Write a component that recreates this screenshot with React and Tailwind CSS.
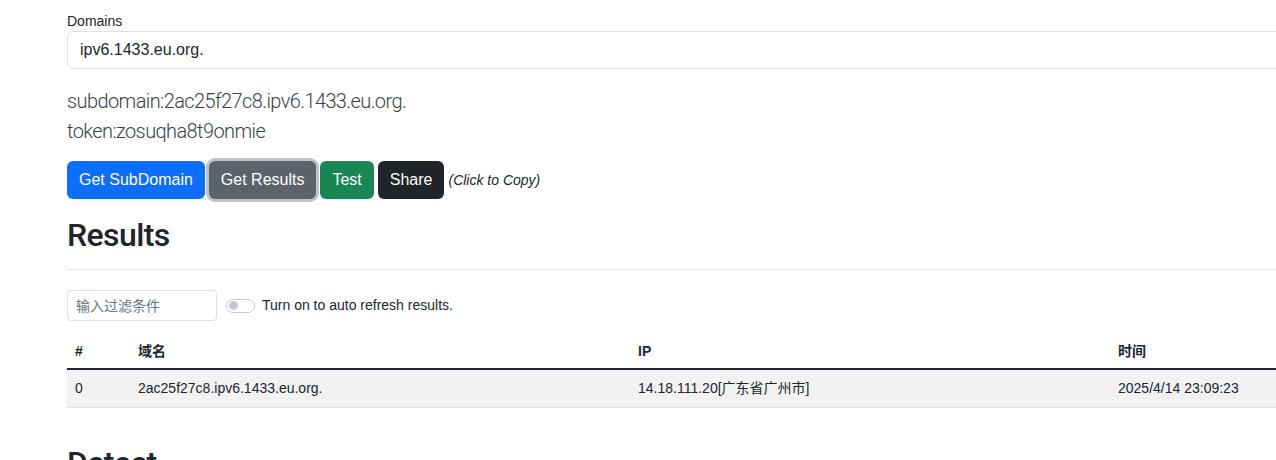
import React, { useState } from 'react';

function Btn({ className, children }) {
  return (
    <button className={`h-[38px] px-3 rounded-md text-[16px] text-white leading-none ${className}`}>
      {children}
    </button>
  );
}

export default function App() {
  const [auto, setAuto] = useState(false);
  const rows = [
    { id: 0, domain: '2ac25f27c8.ipv6.1433.eu.org.', ip: '14.18.111.20[广东省广州市]', time: '2025/4/14 23:09:23' },
  ];

  return (
    <div className="h-[460px] overflow-hidden bg-white text-[#212529] font-['Liberation_Sans','Noto_Sans_CJK_SC',sans-serif]">
      <div className="ml-[67px] w-[1240px] pt-[11px]">
        <label className="block text-[14px] leading-[20px]">Domains</label>
        <input
          className="block w-full h-[38px] px-3 border border-[#dee2e6] rounded-md text-[16px] outline-none"
          defaultValue="ipv6.1433.eu.org."
        />

        <div className="mt-[17px] text-[20px] font-light leading-[30px] tracking-[-0.6px] text-[#3a3f44] font-['Roboto',sans-serif]">
          <div>subdomain:2ac25f27c8.ipv6.1433.eu.org.</div>
          <div>token:zosuqha8t9onmie</div>
        </div>

        <div className="mt-[15px] flex items-center gap-1">
          <Btn className="bg-[#0d6efd]">Get SubDomain</Btn>
          <Btn className="bg-[#5c636a] shadow-[0_0_0_3px_rgba(130,138,145,0.5)]">Get Results</Btn>
          <Btn className="bg-[#198754]">Test</Btn>
          <Btn className="bg-[#212529]">Share</Btn>
          <em className="text-[14px] text-[#212529]">(Click to Copy)</em>
        </div>

        <h2 className="mt-[17px] text-[32px] font-medium leading-[38px] tracking-[-0.6px] font-['Roboto',sans-serif]">Results</h2>
        <hr className="mt-[15px] border-t border-[#e5e5e5]" />

        <div className="mt-[20px] flex items-center gap-[9px]">
          <input
            className="w-[150px] h-[31px] px-2 border border-[#dee2e6] rounded text-[14px] outline-none placeholder:text-[#6c757d]"
            placeholder="输入过滤条件"
          />
          <label className="flex items-center gap-[7px] text-[14px]">
            <span
              onClick={() => setAuto(!auto)}
              className="w-[29px] h-[14px] rounded-full border border-[#c5c8cc] flex items-center px-[2px]"
            >
              <span className="w-[9px] h-[9px] rounded-full bg-[#c5c8cc]" />
            </span>
            Turn on to auto refresh results.
          </label>
        </div>

        <table className="mt-[13px] w-full text-[14px] border-collapse">
          <thead>
            <tr className="border-b-2 border-[#212529]">
              <th className="w-[63px] text-left font-bold px-2 py-[7px] leading-[20px]">#</th>
              <th className="w-[500px] text-left font-bold px-2 py-[7px] leading-[20px]">域名</th>
              <th className="w-[480px] text-left font-bold px-2 py-[7px] leading-[20px]">IP</th>
              <th className="text-left font-bold px-2 py-[7px] leading-[20px]">时间</th>
            </tr>
          </thead>
          <tbody>
            {rows.map((r) => (
              <tr key={r.id} className="bg-[#f2f2f2] border-b border-[#dee2e6]">
                <td className="px-2 py-[8px] leading-[21px]">{r.id}</td>
                <td className="px-2 py-[8px] leading-[21px]">{r.domain}</td>
                <td className="px-2 py-[8px] leading-[21px]">{r.ip}</td>
                <td className="px-2 py-[8px] leading-[21px]">{r.time}</td>
              </tr>
            ))}
          </tbody>
        </table>

        <h2 className="mt-[36px] text-[32px] font-medium leading-[38px] tracking-[-0.6px] font-['Roboto',sans-serif]">Detect</h2>
      </div>
    </div>
  );
}
